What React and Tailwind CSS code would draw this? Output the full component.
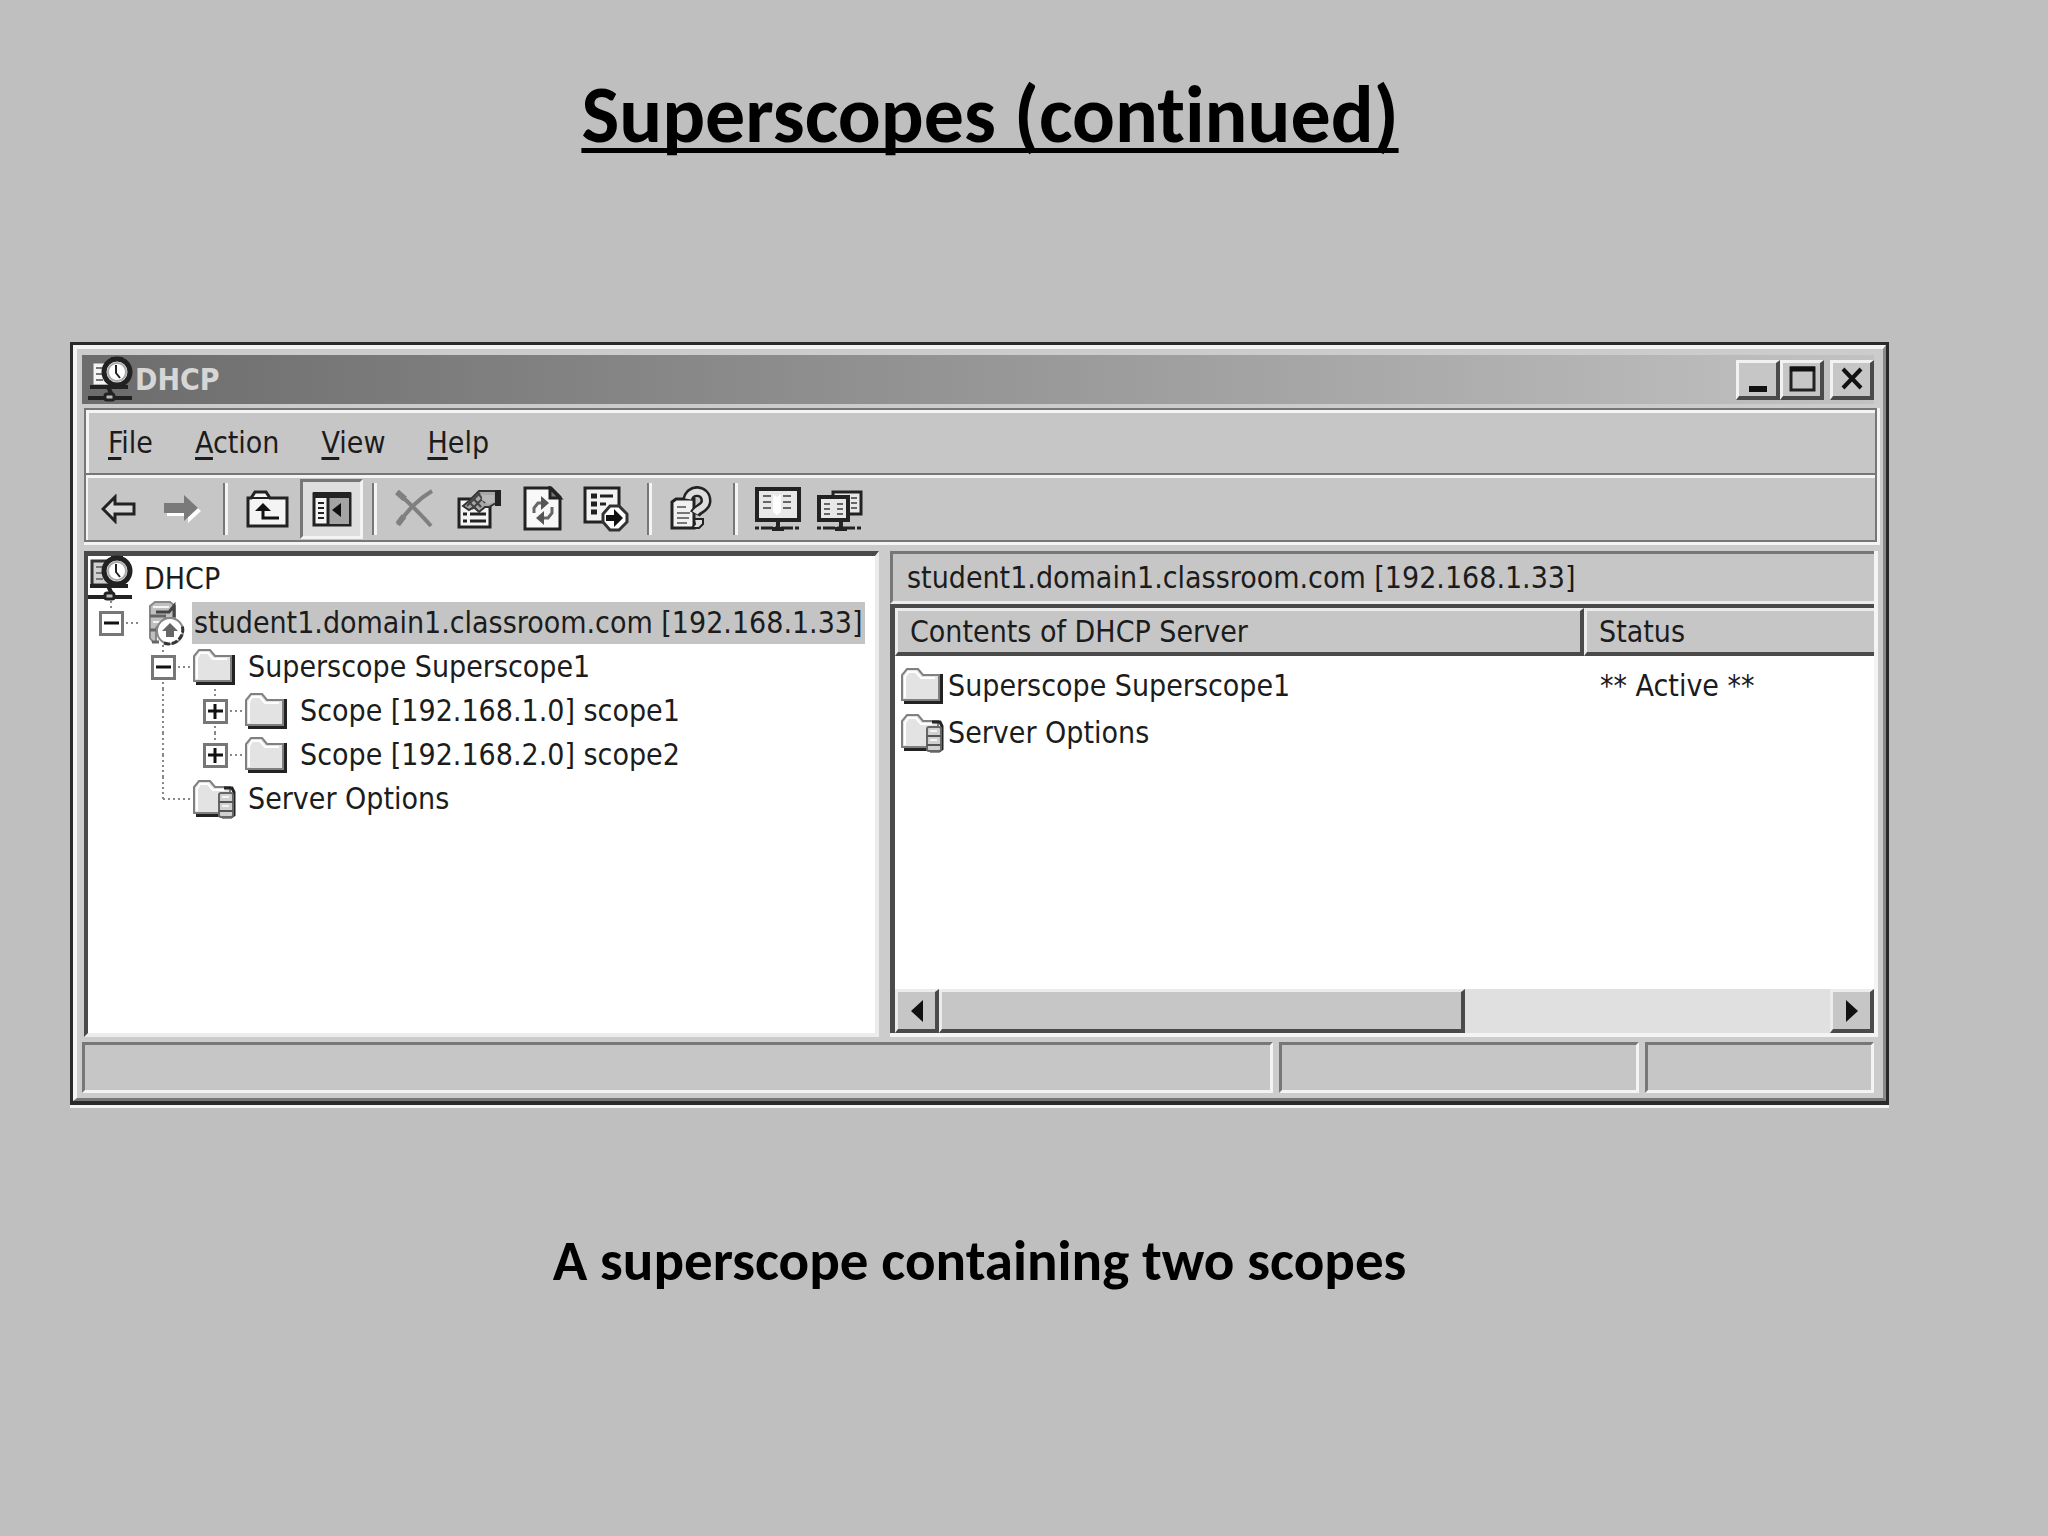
import React, { useState } from "react";

const menus = ["File", "Action", "View", "Help"];

const treeItems = [
    { label: "DHCP", icon: "dhcp", cells: [] },
    { label: "student1.domain1.classroom.com [192.168.1.33]", icon: "server", cells: ["root"], sign: "minus" },
    { label: "Superscope Superscope1", icon: "folder", cells: ["empty", "tee"], sign: "minus" },
    { label: "Scope [192.168.1.0] scope1", icon: "folder", cells: ["empty", "line", "tee"], sign: "plus" },
    { label: "Scope [192.168.2.0] scope2", icon: "folder", cells: ["empty", "line", "corner"], sign: "plus" },
    { label: "Server Options", icon: "options", cells: ["empty", "corner"] },
];

const contents = [
    { name: "Superscope Superscope1", icon: "folder", status: "** Active **" },
    { name: "Server Options", icon: "options", status: "" },
];

function DhcpIcon({ screen = "#f4f4f4", frame = "#333" }) {
    return (
        <svg width="44" height="46" viewBox="0 0 44 46" fill="none" className="shrink-0 overflow-visible">
            <rect x="4" y="5" width="26" height="24" fill={screen} stroke={frame} strokeWidth="3" />
            <path d="M8 11h7M8 17h6M8 23h7" stroke="#777" strokeWidth="2" />
            <path d="M2 30h38" stroke="#222" strokeWidth="4" />
            <path d="M20 30l3 6-3 5" stroke="#222" strokeWidth="4" />
            <path d="M0 41h44" stroke="#222" strokeWidth="4" />
            <rect x="17" y="37" width="9" height="6" rx="2" fill="#bbb" stroke="#222" strokeWidth="3" />
            <path d="M23 2h12" stroke="#222" strokeWidth="4" />
            <circle cx="29" cy="15" r="13" fill="#e8e8e8" stroke="#222" strokeWidth="5" />
            <circle cx="29" cy="15" r="9" fill="#fff" stroke="#aaa" strokeWidth="2" />
            <path d="M28 8v8l4 5" stroke="#222" strokeWidth="2" />
        </svg>
    );
}

function ServerIcon() {
    return (
        <svg width="38" height="44" viewBox="0 0 38 44" fill="none" className="overflow-visible">
            <path d="M3 5l5-4h15l5 4v12H18L9 27v14H6l-3-4z" fill="#c0c0c0" stroke="#888" strokeWidth="2" />
            <path d="M9 11h13l5-6v11" stroke="#444" strokeWidth="3" />
            <path d="M6 6h16M6 21h8" stroke="#f4f4f4" strokeWidth="2" />
            <path d="M3 15h16M3 29h6M5 41h7" stroke="#666" strokeWidth="3" />
            <circle cx="23" cy="30" r="13" fill="#fff" stroke="#888" strokeWidth="2" />
            <path d="M17 42c10 4 22-6 18-18" stroke="#333" strokeWidth="3" strokeDasharray="6 2" />
            <path d="M23 22l8 8h-4v6H19v-6h-4z" fill="#666" />
        </svg>
    );
}

function FolderIcon() {
    return (
        <svg width="44" height="38" viewBox="0 0 44 38" fill="none">
            <path d="M4 35h37V7" stroke="#222" strokeWidth="4" />
            <path d="M2 33V8l5-6h11l5 6h16v25z" fill="#e3e3e3" stroke="#808080" strokeWidth="2" />
            <path d="M5 31V10l3-5h8l5 6h14" stroke="#fff" strokeWidth="2" />
        </svg>
    );
}

function OptionsIcon() {
    return (
        <svg width="44" height="40" viewBox="0 0 44 40" fill="none">
            <path d="M4 36h23" stroke="#222" strokeWidth="4" />
            <path d="M2 34V8l5-6h11l5 6h15v26z" fill="#e3e3e3" stroke="#808080" strokeWidth="2" />
            <path d="M5 32V10l3-5h8l5 6h12" stroke="#fff" strokeWidth="2" />
            <path d="M32 9h8l2 4v23l-3 2H30" stroke="#222" strokeWidth="3" />
            <rect x="27" y="14" width="14" height="24" rx="2" fill="#d0d0d0" stroke="#666" strokeWidth="2" />
            <path d="M27 23h14M27 32h14" stroke="#555" strokeWidth="2" />
            <path d="M30 18h7M30 27h7" stroke="#f4f4f4" strokeWidth="2" />
        </svg>
    );
}

const icons = {
    dhcp: <DhcpIcon screen="#d0d0d0" />,
    server: <ServerIcon />,
    folder: <FolderIcon />,
    options: <OptionsIcon />,
};

function BackIcon() {
    return (
        <svg width="38" height="30" viewBox="0 0 38 30">
            <path d="M2 15L14 3v7h19v10H14v7z" fill="#d8d8d8" stroke="#222" strokeWidth="3" />
        </svg>
    );
}

function ForwardIcon() {
    return (
        <svg width="42" height="32" viewBox="0 0 42 32">
            <path d="M5 13h20V6l14 12-13 12v-7H5z" fill="#fff" />
            <path d="M2 10h20V2l14 13-14 13v-8H2z" fill="#7a7a7a" />
        </svg>
    );
}

function UpIcon() {
    return (
        <svg width="46" height="40" viewBox="0 0 46 40" fill="none">
            <path d="M2 37V9h3l4-6h11l4 6h17v28z" fill="#f4f4f4" stroke="#222" strokeWidth="3" />
            <path d="M4 9h20" stroke="#222" strokeWidth="2" />
            <path d="M17 17v12h16" stroke="#111" strokeWidth="3" />
            <path d="M9 22l8-8 8 8z" fill="#111" />
        </svg>
    );
}

function TreeToggleIcon() {
    return (
        <svg width="40" height="36" viewBox="0 0 40 36" fill="none">
            <rect x="2" y="3" width="36" height="31" fill="#f4f4f4" stroke="#222" strokeWidth="3" />
            <rect x="17" y="7" width="20" height="26" fill="#a4a4a4" />
            <path d="M1 4h38" stroke="#222" strokeWidth="6" />
            <path d="M16 6v28" stroke="#222" strokeWidth="3" />
            <path d="M6 12h6M6 17h6M6 22h6M6 27h6" stroke="#222" strokeWidth="2" />
            <path d="M29 12v14l-9-7z" fill="#111" />
        </svg>
    );
}

function DeleteIcon() {
    return (
        <svg width="50" height="40" viewBox="0 0 50 40" fill="none" stroke="#808080">
            <path d="M4 3c10 9 22 20 34 34" strokeWidth="4" />
            <path d="M39 2C27 9 13 22 5 36" strokeWidth="4" />
            <path d="M4 3l8 7M5 35l6-8" strokeWidth="6" />
        </svg>
    );
}

function PropertiesIcon() {
    return (
        <svg width="50" height="42" viewBox="0 0 50 42" fill="none">
            <rect x="3" y="11" width="31" height="28" fill="#f4f4f4" stroke="#222" strokeWidth="3" />
            <path d="M7 26h4M14 26h16M7 33h4M14 33h16" stroke="#222" strokeWidth="3" />
            <path d="M7 18l6-5 10-10h17v12l-7 4h-4l-6 5-5-5-5 3z" fill="#a8a8a8" stroke="#333" strokeWidth="2" />
            <path d="M12 13l9 9M16 9l9 10M22 5l7 10M11 18L24 5M16 21L29 8" stroke="#444" strokeWidth="2" />
            <path d="M26 7h12v7l-6 2-6-4z" fill="#b8b8b8" />
            <path d="M42 2v16" stroke="#222" strokeWidth="6" />
        </svg>
    );
}

function RefreshIcon() {
    return (
        <svg width="42" height="46" viewBox="0 0 42 46" fill="none">
            <path d="M2 2h26l9 9v32H2z" fill="#f8f8f8" stroke="#222" strokeWidth="3" />
            <path d="M27 2v10h10z" fill="#777" stroke="#222" strokeWidth="3" />
            <path d="M11 27v-5l4-5h4M29 21v6l-4 5h-4" stroke="#666" strokeWidth="3" />
            <path d="M18 10l8 7-8 7zM21 25v14l-8-7z" fill="#555" />
        </svg>
    );
}

function ExportIcon() {
    return (
        <svg width="48" height="46" viewBox="0 0 48 46" fill="none">
            <rect x="2" y="2" width="34" height="34" fill="#f4f4f4" stroke="#222" strokeWidth="3" />
            <path d="M8 10h6M8 18h6M8 26h6" stroke="#222" strokeWidth="5" />
            <path d="M17 10h13M17 18h6" stroke="#222" strokeWidth="3" />
            <path d="M27 20h9l8 8v8l-8 8h-9l-7-8v-8z" fill="#fff" stroke="#333" strokeWidth="3" />
            <path d="M23 29h8v-6l9 9-9 9v-6h-8z" fill="#111" />
        </svg>
    );
}

function HelpIcon() {
    return (
        <svg width="48" height="46" viewBox="0 0 48 46" fill="none">
            <path d="M3 16l4-3h18v29H3z" fill="#f0f0f0" stroke="#222" strokeWidth="3" />
            <path d="M8 21h9M8 27h13M8 32h12M8 37h10" stroke="#777" strokeWidth="2" />
            <path d="M19 14c1-12 18-11 18 1 0 7-8 7-11 13" stroke="#222" strokeWidth="11" />
            <path d="M19 13c2-10 18-10 18 2 0 7-8 7-11 12" stroke="#dedede" strokeWidth="6" />
            <path d="M25 33h9v5l-4 4h-7l3-4z" fill="#dedede" stroke="#222" strokeWidth="2" />
        </svg>
    );
}

function ServerStatusIcon() {
    return (
        <svg width="50" height="46" viewBox="0 0 50 46" fill="none">
            <rect x="3" y="3" width="42" height="31" fill="#e8e8e8" stroke="#222" strokeWidth="4" />
            <path d="M9 10h8M9 16h8M9 22h8M29 10h8M29 16h8M29 22h8" stroke="#666" strokeWidth="2" />
            <path d="M19 8l4 3 4-3v18l-4 3-4-3z" fill="#fff" />
            <path d="M24 35v7M18 43h12" stroke="#222" strokeWidth="4" />
            <path d="M1 42h46" stroke="#222" strokeWidth="3" strokeDasharray="4 2 12 2" />
        </svg>
    );
}

function ServersIcon() {
    return (
        <svg width="52" height="46" viewBox="0 0 52 46" fill="none">
            <rect x="17" y="6" width="28" height="22" fill="#e8e8e8" stroke="#222" strokeWidth="3" />
            <path d="M35 12h6M35 17h6M35 22h6" stroke="#666" strokeWidth="2" />
            <rect x="3" y="11" width="29" height="23" fill="#e8e8e8" stroke="#222" strokeWidth="4" />
            <path d="M8 18h6M8 23h6M8 28h6M21 18h6M21 23h6M21 28h6" stroke="#666" strokeWidth="2" />
            <path d="M25 35v7M19 43h12" stroke="#222" strokeWidth="4" />
            <path d="M1 42h46" stroke="#222" strokeWidth="3" strokeDasharray="4 2 12 2" />
        </svg>
    );
}

const toolGroups = [
    [
        { label: "Back", icon: <BackIcon /> },
        { label: "Forward", icon: <ForwardIcon /> },
    ],
    [
        { label: "Up one level", icon: <UpIcon /> },
        { label: "Show/Hide console tree", icon: <TreeToggleIcon />, pressed: true },
    ],
    [
        { label: "Delete", icon: <DeleteIcon /> },
        { label: "Properties", icon: <PropertiesIcon /> },
        { label: "Refresh", icon: <RefreshIcon /> },
        { label: "Export list", icon: <ExportIcon /> },
    ],
    [{ label: "Help", icon: <HelpIcon /> }],
    [
        { label: "Server status", icon: <ServerStatusIcon /> },
        { label: "Add server", icon: <ServersIcon /> },
    ],
];

function TitleBar() {
    const button = "flex h-10 w-11 items-center justify-center border-t-3 border-r-4 border-b-4 border-l-3 border-t-[#f2f2f2] border-r-[#4a4a4a] border-b-[#4a4a4a] border-l-[#f2f2f2] bg-[#c6c6c6]";

    return (
        <header className="mr-[6px] flex h-[49px] items-center bg-linear-to-r from-[#6c6c6c] to-[#c2c2c2] pl-[6px]">
            <DhcpIcon frame="#6c6c6c" />
            <h2 className="ml-[3px] flex-1 text-[30px] leading-none font-bold text-[#d6d6d6]">DHCP</h2>
            <button type="button" aria-label="Minimize" className={button}>
                <svg width="30" height="30" viewBox="0 0 30 30"><path d="M6 25h18" stroke="#111" strokeWidth="6" /></svg>
            </button>
            <button type="button" aria-label="Maximize" className={button}>
                <svg width="30" height="30" viewBox="0 0 30 30" fill="none">
                    <rect x="4" y="4" width="23" height="22" stroke="#222" strokeWidth="3" />
                    <path d="M3 5h25" stroke="#111" strokeWidth="5" />
                </svg>
            </button>
            <button type="button" aria-label="Close" className={button + " ml-[6px]"}>
                <svg width="30" height="30" viewBox="0 0 30 30"><path d="M6 5l18 19M24 5L6 24" stroke="#111" strokeWidth="4" /></svg>
            </button>
        </header>
    );
}

function MenuBar() {
    return (
        <nav className="flex h-[63px] items-center gap-9 border-t-3 border-l-3 border-[#f4f4f4] pl-4">
            {menus.map((m) => (
                <button key={m} type="button" className="px-[3px] leading-none">
                    <span className="underline decoration-3 underline-offset-4">{m[0]}</span>{m.slice(1)}
                </button>
            ))}
        </nav>
    );
}

function Toolbar() {
    return (
        <div role="toolbar" aria-label="Standard" className="flex h-[65px] items-center border-t-3 border-l-2 border-t-[#f4f4f4] border-l-[#f4f4f4]">
            {toolGroups.map((group, i) => (
                <React.Fragment key={i}>
                    {i > 0 && <div className="mx-[9px] h-[52px] w-[5px] border-r-3 border-l-2 border-r-[#f4f4f4] border-l-[#777]" />}
                    {group.map((tool) => (
                        <button
                            key={tool.label}
                            type="button"
                            aria-label={tool.label}
                            aria-pressed={tool.pressed}
                            className={
                                tool.pressed
                                    ? "flex h-[60px] w-[63px] items-center justify-center border-3 border-t-[#777] border-r-[#f4f4f4] border-b-[#f4f4f4] border-l-[#777] bg-[#dedede]"
                                    : "flex h-[60px] w-[63px] items-center justify-center"
                            }
                        >
                            {tool.icon}
                        </button>
                    ))}
                </React.Fragment>
            ))}
        </div>
    );
}

// one 52px indent step, with its dotted connector and the +/- box
function TreeCell({ kind, sign }) {
    const top = kind !== "empty";
    const bottom = kind === "tee" || kind === "line";
    // an expanded node's children hang under its icon, in the next column
    const last = kind === "root" || kind === "tee" || kind === "corner";

    return (
        <span className="relative flex h-11 w-[52px] shrink-0 items-center">
            <svg width="52" height="44" viewBox="0 0 52 44" fill="none" stroke="#888" strokeWidth="2" strokeDasharray="2 3">
                {top && <path d="M23 0v22" />}
                {bottom && <path d="M23 22v22" />}
                {last && <path d="M23 22h29" />}
            </svg>
            {sign && (
                <button type="button" aria-label={sign === "plus" ? "Expand" : "Collapse"} className="absolute top-[10px] left-[11px] flex size-[25px] items-center justify-center border-3 border-[#777] bg-white">
                    <svg width="15" height="15" viewBox="0 0 15 15" stroke="#111" strokeWidth="3">
                        <path d="M0 7h15" />
                        {sign === "plus" && <path d="M7 0v15" />}
                    </svg>
                </button>
            )}
        </span>
    );
}

function ScopeTree({ selected, onSelect }) {
    return (
        <div className="min-w-0 border-t-5 border-r-4 border-b-4 border-l-4 border-t-[#4a4a4a] border-r-[#ececec] border-b-[#ececec] border-l-[#4a4a4a] bg-white">
            <ul role="tree" aria-label="DHCP" className="pt-[1px]">
                {treeItems.map((item) => (
                    <li key={item.label} role="treeitem" aria-selected={selected === item.label} className="flex h-11 items-center">
                        {item.cells.map((kind, i) => (
                            <TreeCell key={i} kind={kind} sign={i === item.cells.length - 1 ? item.sign : undefined} />
                        ))}
                        <span className={item.icon === "server" ? "flex w-[52px] shrink-0 justify-center" : "flex w-[52px] shrink-0"}>{icons[item.icon]}</span>
                        <button
                            type="button"
                            onClick={() => onSelect(item.label)}
                            className={
                                selected === item.label
                                    ? "h-[42px] bg-[#c4c4c4] px-[2px] leading-none whitespace-nowrap"
                                    : "h-[42px] px-1 leading-none whitespace-nowrap"
                            }
                        >
                            {item.label}
                        </button>
                    </li>
                ))}
            </ul>
        </div>
    );
}

function ScrollBar() {
    const raised = "border-t-3 border-r-4 border-b-4 border-l-3 border-t-[#ececec] border-r-[#4a4a4a] border-b-[#4a4a4a] border-l-[#ececec] bg-[#c6c6c6]";

    return (
        <div className="flex h-11 bg-[#e0e0e0]">
            <button type="button" aria-label="Scroll left" className={"flex w-11 items-center justify-center " + raised}>
                <svg width="12" height="22" viewBox="0 0 12 22"><path d="M12 0v22L0 11z" fill="#111" /></svg>
            </button>
            <div className="flex-1">
                <div className={"h-full w-[59%] " + raised} />
            </div>
            <button type="button" aria-label="Scroll right" className={"flex w-11 items-center justify-center " + raised}>
                <svg width="12" height="22" viewBox="0 0 12 22"><path d="M0 0v22l12-11z" fill="#111" /></svg>
            </button>
        </div>
    );
}

function ContentsPane({ title }) {
    const th = "h-12 border-t-3 border-b-4 border-l-3 border-t-[#ececec] border-b-[#4a4a4a] border-l-[#ececec] bg-[#c6c6c6] pl-3 text-left font-normal";

    return (
        <div className="flex min-w-0 flex-col border-r-4 border-b-4 border-[#f4f4f4]">
            <div className="flex h-[53px] items-center border-t-3 border-b-3 border-l-3 border-t-[#777] border-b-[#ececec] border-l-[#777] bg-[#c6c6c6] pl-[14px] leading-none whitespace-nowrap">
                {title}
            </div>
            <div className="flex flex-1 flex-col border-t-4 border-l-5 border-[#4a4a4a] bg-white">
                <table className="w-full table-fixed border-separate border-spacing-0 leading-none">
                    <thead>
                        <tr>
                            <th scope="col" className={th + " border-r-4 border-r-[#4a4a4a]"}>Contents of DHCP Server</th>
                            <th scope="col" className={th + " w-[290px]"}>Status</th>
                        </tr>
                    </thead>
                    <tbody>
                        <tr className="h-[6px]" />
                        {contents.map((row) => (
                            <tr key={row.name}>
                                <td className="h-[47px] p-0 pl-[5px]">
                                    <span className="flex items-center gap-1">{icons[row.icon]}{row.name}</span>
                                </td>
                                <td className="p-0 pl-4">{row.status}</td>
                            </tr>
                        ))}
                    </tbody>
                </table>
                <div className="mt-auto pt-[233px]">
                    <ScrollBar />
                </div>
            </div>
        </div>
    );
}

function StatusBar() {
    const panel = "border-3 border-t-[#777] border-r-[#f4f4f4] border-b-[#f4f4f4] border-l-[#777] bg-[#c6c6c6]";

    return (
        <footer className="mt-[5px] mr-[6px] grid h-[51px] grid-cols-[1190fr_360fr_229fr] gap-[6px]">
            <div className={panel} />
            <div className={panel} />
            <div className={panel} />
        </footer>
    );
}

export default function App() {
    const [selected, setSelected] = useState(treeItems[1].label);

    return (
        <main className="min-h-screen bg-[#bfbfbf] pr-[159px] pl-[70px] text-black">
            <h1 className="pt-[67px] pl-[21px] text-center font-[family-name:Carlito,Calibri,Lato,sans-serif] text-[80px] leading-[96px] font-bold underline decoration-5 underline-offset-6 [font-variant-ligatures:none] [text-decoration-skip-ink:none]">
                Superscopes (continued)
            </h1>

            <section aria-label="DHCP" className="mt-[179px] border-3 border-b-4 border-[#2a2a2a] bg-[#c6c6c6] font-[family-name:'DejaVu_Sans_Condensed',Tahoma,sans-serif] text-[30px] text-[#1c1c1c] shadow-[0_3px_0_#f4f4f4]">
                <div className="border-t-4 border-r-3 border-b-3 border-l-4 border-t-[#f4f4f4] border-r-[#8a8a8a] border-b-[#777] border-l-[#f4f4f4] bg-[#cccccc] pt-[6px] pr-[3px] pb-[5px] pl-[5px]">
                    <TitleBar />
                    <div className="mt-1 ml-[2px] border-r-3 border-b-3 border-[#f4f4f4]">
                        <div className="border-2 border-[#777] bg-[#c6c6c6]">
                            <MenuBar />
                            <div className="h-[2px] bg-[#777]" />
                            <Toolbar />
                        </div>
                    </div>
                    <div className="mt-[6px] mr-[2px] ml-[2px] grid grid-cols-[795fr_988fr] gap-[11px]">
                        <ScopeTree selected={selected} onSelect={setSelected} />
                        <ContentsPane title={selected} />
                    </div>
                    <StatusBar />
                </div>
            </section>

            <p className="mt-[122px] text-center font-[family-name:Carlito,Calibri,Lato,sans-serif] text-[57px] leading-[68px] font-bold [font-variant-ligatures:none]">
                A superscope containing two scopes
            </p>
        </main>
    );
}
